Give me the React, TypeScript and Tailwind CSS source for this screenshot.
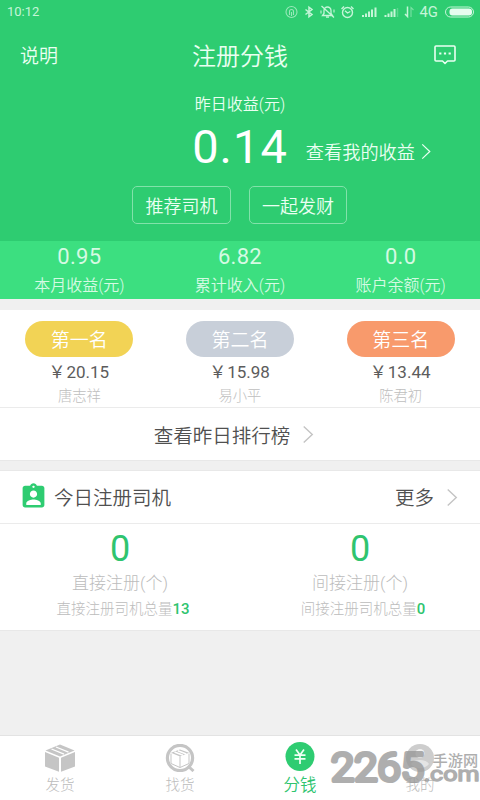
import { MdAssignmentInd } from 'react-icons/md';

interface ChevronProps {
  className?: string;
}

const stats = [
  { value: '0.95', label: '本月收益(元)' },
  { value: '6.82', label: '累计收入(元)' },
  { value: '0.0', label: '账户余额(元)' },
];

const ranking = [
  { title: '第一名', amount: '20.15', name: '唐志祥', color: 'bg-[#f2d355]' },
  { title: '第二名', amount: '15.98', name: '易小平', color: 'bg-[#c8cfd9]' },
  { title: '第三名', amount: '13.44', name: '陈君初', color: 'bg-[#f89a6c]' },
];

const drivers = [
  { count: 0, label: '直接注册(个)', totalLabel: '直接注册司机总量', total: 13 },
  { count: 0, label: '间接注册(个)', totalLabel: '间接注册司机总量', total: 0 },
];

function Chevron({ className }: ChevronProps) {
  return (
    <svg viewBox="0 0 12 20" className={className} fill="none" stroke="currentColor" strokeWidth="1.5">
      <path d="M1.5 1.5 10.5 10l-9 8.5" />
    </svg>
  );
}

function StatusBar() {
  return (
    <div className="flex h-6 items-center justify-between pl-[7px] pr-[6px] text-[#c5f5d8]">
      <span className="text-[13px] leading-6">10:12</span>
      <svg width="190" height="24" viewBox="284 0 190 24" fill="none" stroke="currentColor" strokeWidth="1.1">
        <g opacity="0.7">
          <circle cx="291.5" cy="12" r="5.5" />
          <path d="M289.5 15v-3.5a2 2 0 0 1 4 0V15M291.5 12v4" />
        </g>
        <path d="m305.500 9.500 6.500 5-3 2.300V7.200l3 2.300-6.500 5" strokeWidth="1.500" />
        <path d="M322.500 15.500h10l-1.500-2v-3a3.500 3.500 0 0 0-7 0v3zM326 17.200h3M321.500 6l12.500 11.500" strokeWidth="1.300" />
        <path d="M321 10.500v3M334 9.500v3" />
        <circle cx="347.500" cy="12.500" r="5" strokeWidth="1.400" />
        <path d="m345 10.800 2.500 2.200 2.800-1.500M341.500 9l2.500-2.500M353.500 9 351 6.500" strokeWidth="1.400" />
        <path d="M363 17v-2M366 17v-3.500M369 17v-5.500M372 17v-7.500M375.500 17V7.500" strokeWidth="2" />
        <path d="M385.500 17v-2M388.500 17v-3.500M391.500 17v-5.500M394.500 17V9" strokeWidth="2" />
        <path d="M397.500 17V8" strokeWidth="1.500" opacity="0.3" />
        <path d="M407.500 6.500v10l-2.500-2.500" strokeWidth="1.500" />
        <path d="M411 17V7.500l2.500 2.500" opacity="0.5" />
        <text x="419.500" y="17" fontSize="14" fill="currentColor" stroke="none" textLength="18.500" lengthAdjust="spacingAndGlyphs">4G</text>
        <rect x="445.500" y="7" width="28" height="10" rx="5" strokeWidth="1" />
        <rect x="449.500" y="8.500" width="22.500" height="7" rx="3" fill="#e6fcef" stroke="none" />
      </svg>
    </div>
  );
}

function Header() {
  return (
    <header className="h-[241px] bg-[#2ecc71] text-[#eafff2]">
      <StatusBar />
      <div className="grid h-16 grid-cols-3 items-center px-5">
        <span className="pt-[3px] text-[19px] font-[350]">说明</span>
        <h1 className="pt-[2px] text-center text-[24px] font-[350]">注册分钱</h1>
        <svg className="mr-[3px] justify-self-end" width="24" height="22" viewBox="0 0 24 22" fill="none" stroke="currentColor" strokeWidth="1.600">
          <path d="M3 1h18a1 1 0 0 1 1 1v13a1 1 0 0 1-1 1h-6.500L12 18.500 9.500 16H3a1 1 0 0 1-1-1V2a1 1 0 0 1 1-1z" strokeLinejoin="round" />
          <path d="M6.200 8.500h2.200M10.900 8.500h2.200M15.600 8.500h2.200" strokeWidth="2.200" />
        </svg>
      </div>
      <div className="h-7 pt-[5px] text-center text-[16px] leading-6 font-[350]">昨日收益(元)</div>
      <div className="grid h-[62px] grid-cols-[1fr_auto_1fr] items-center">
        <span className="col-start-2 text-[47px] leading-[60px] tracking-[1px] text-white">0.14</span>
        <a className="mt-[12px] flex items-center gap-[6px] pl-[18px] text-[18.200px] font-[350]">
          查看我的收益
          <Chevron className="mb-[2px] h-[17px] w-[10px]" />
        </a>
      </div>
      <div className="mt-2 flex h-[38px] justify-center gap-[18px] pr-px text-[18px] font-[350]">
        <button className="w-[99px] rounded-[5px] border border-[#82e2aa] pt-[2px]">推荐司机</button>
        <button className="w-[98px] rounded-[5px] border border-[#82e2aa] pt-[2px]">一起发财</button>
      </div>
    </header>
  );
}

function Stats() {
  return (
    <section className="h-[58px] bg-[#3cdf80] text-[#d5fae3]">
      <div className="-mx-px grid grid-cols-3 text-center">
        {stats.map((s) => (
          <div key={s.label}>
            <div className="h-[31px] text-[22px] leading-[31px] tracking-[0.300px]">{s.value}</div>
            <div className="h-7 text-[16px] leading-7 font-[350]">{s.label}</div>
          </div>
        ))}
      </div>
    </section>
  );
}

function Ranking() {
  return (
    <section className="mt-[11px] h-[151px] border-b border-[#e8e8e8] bg-white">
      <div className="h-[98px] border-b border-[#ebebeb] pt-[11px]">
        <div className="-mx-px grid grid-cols-3 justify-items-center">
          {ranking.map((r) => (
            <div key={r.name} className="flex flex-col items-center">
              <div className={`h-9 w-[108px] rounded-full text-center text-[19px] leading-[39px] font-[350] text-white ${r.color}`}>
                {r.title}
              </div>
              <div className="mt-[3px] h-6 text-[17px] leading-6 text-[#5c5c5c]">
                <span className="-ml-px mr-px">￥</span>
                {r.amount}
              </div>
              <div className="h-[22px] text-[14.300px] leading-[25px] font-light text-[#bebebe]">{r.name}</div>
            </div>
          ))}
        </div>
      </div>
      <a className="flex h-[53px] items-center justify-center gap-3 pr-[12px] text-[19.500px] font-[350] text-[#505050]">
        <span className="pt-[4px]">查看昨日排行榜</span>
        <Chevron className="h-[19px] w-3 text-[#c4c4c4]" />
      </a>
    </section>
  );
}

function Drivers() {
  return (
    <section className="mt-[9px] h-[161px] border-y border-[#e8e8e8] bg-white">
      <div className="flex h-[53px] items-center border-b border-[#ebebeb] pl-[19px] pr-[22px] text-[19.500px] font-[350] text-[#505050]">
        <MdAssignmentInd size={29} className="mb-[2px] text-[#2ecc71]" />
        <span className="ml-[6px] pt-[3px]">今日注册司机</span>
        <span className="ml-auto mr-3 pt-[3px]">更多</span>
        <Chevron className="h-[19px] w-3 text-[#c4c4c4]" />
      </div>
      <div className="grid grid-cols-2 text-center text-[#bcbcbc]">
        {drivers.map((d) => (
          <div key={d.label} className="pt-[3px]">
            <div className="h-[43px] text-[36px] leading-[44px] text-[#2fc46f]">{d.count}</div>
            <div className="h-[26px] text-[17px] leading-[26px] font-light">{d.label}</div>
            <div className="h-6 pl-[6px] text-[14.500px] leading-[26px] font-light">
              {d.totalLabel}
              <span className="text-[15px] font-medium text-[#2fc46f]">{d.total}</span>
            </div>
          </div>
        ))}
      </div>
    </section>
  );
}

function BoxIcon() {
  return (
    <svg width="30" height="28" viewBox="0 0 30 28" fill="#c5c5c5">
      <path d="M15 .5 29.500 6.500 15 12.500.5 6.500z" />
      <path d="M0 8v14.500l14 5.300V13.800zM30 8v14.500l-14 5.300V13.800z" />
      <path d="m6.500 5 12.500 5.200M11 3l12.500 5.200" stroke="#fff" strokeWidth="1.300" />
    </svg>
  );
}

function SearchBoxIcon() {
  return (
    <svg width="30" height="28" viewBox="0 0 30 28" fill="none">
      <circle cx="15" cy="14" r="12.600" stroke="#c5c5c5" strokeWidth="3.200" />
      <path d="m23.500 22.500 5 4.500" stroke="#c5c5c5" strokeWidth="3" />
      <path d="m15 5.500 9 3.300-9 3.700-9-3.700z" fill="#c5c5c5" />
      <path d="m9.500 8 8.500 3.300M12.800 6.700l8.500 3.300" stroke="#fff" strokeWidth="1.600" />
      <path d="M6 9.500v10l9 4 9-4v-10M15 12.400v11" stroke="#c5c5c5" strokeWidth="1" />
    </svg>
  );
}

function MoneyIcon() {
  return (
    <svg width="30" height="28" viewBox="0 0 30 28" fill="none" className="overflow-visible">
      <circle cx="15" cy="12.500" r="14.500" fill="#2ecc71" />
      <path d="m11 5.500 4 5.500 4-5.500M9.500 11.200h11M9.500 14.800h11M15 11v9" stroke="#f0fff5" strokeWidth="1.700" />
    </svg>
  );
}

function ProfileIcon() {
  return (
    <svg width="30" height="28" viewBox="0 0 30 28">
      <circle cx="15" cy="14" r="14" fill="#cdcdcd" />
      <circle cx="15" cy="9.500" r="4.500" fill="#f2f2f2" />
      <path d="M6 20c3-5.500 15-5.500 18 0-4 5.500-14 5.500-18 0z" fill="#e4e4e4" />
    </svg>
  );
}

const tabs = [
  { label: '发货', icon: <BoxIcon />, active: false },
  { label: '找货', icon: <SearchBoxIcon />, active: false },
  { label: '分钱', icon: <MoneyIcon />, active: true },
  { label: '我的', icon: <ProfileIcon />, active: false },
];

function Watermark() {
  return (
    <svg
      className="pointer-events-none absolute right-0 bottom-0"
      width="152"
      height="60"
      viewBox="328 740 152 60"
      fill="#989898"
      stroke="#989898"
      strokeLinejoin="round"
      opacity="0.78"
    >
      <text x="331" y="781" fontSize="39" fontWeight="300" strokeWidth="4.200" textLength="93" lengthAdjust="spacingAndGlyphs">2265</text>
      <text x="432.500" y="766" fontSize="15.200" stroke="none" fontWeight="500">手游网</text>
      <text x="423.500" y="781" fontSize="20.500" strokeWidth="1.400" textLength="56" lengthAdjust="spacingAndGlyphs">.com</text>
    </svg>
  );
}

export default function App() {
  return (
    <div className="relative flex h-[800px] w-[480px] flex-col overflow-hidden bg-[#f0f0f0] font-[Roboto,'Noto_Sans_CJK_SC',sans-serif]">
      <Header />
      <Stats />
      <Ranking />
      <Drivers />
      <nav className="mt-auto grid h-[65px] grid-cols-4 border-t border-[#e3e3e3] bg-white">
        {tabs.map((t) => (
          <div key={t.label} className="flex flex-col items-center pt-2">
            {t.icon}
            <span
              className={
                t.active
                  ? 'text-[16.500px] leading-[27px] font-[350] text-[#2fc46f]'
                  : 'text-[14.500px] leading-[27px] font-light text-[#bcbcbc]'
              }
            >
              {t.label}
            </span>
          </div>
        ))}
      </nav>
      <Watermark />
    </div>
  );
}
